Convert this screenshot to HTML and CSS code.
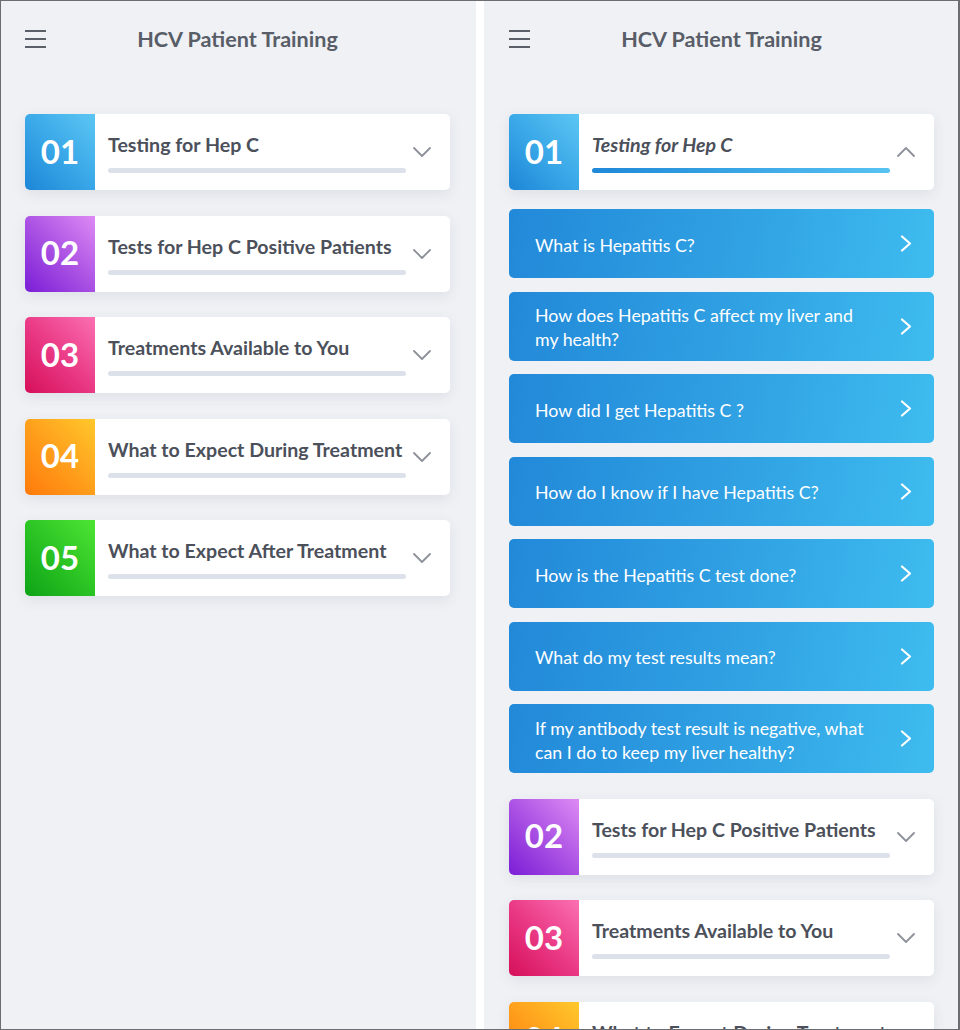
FILE: index.html
```html
<!DOCTYPE html>
<html lang="en">
<head>
<meta charset="utf-8">
<title>HCV Patient Training</title>
<link rel="stylesheet" href="styles.css">
</head>
<body>
<div class="frame">
  <section class="panel panel-left">
    <header class="topbar">
      <span class="menu"><i></i><i></i><i></i></span>
      <h1 class="title">HCV Patient Training</h1>
      <span></span>
    </header>
    <div class="modules">
      <div class="card">
        <div class="num n1">01</div>
        <div class="card-body"><div class="card-title">Testing for Hep C</div><div class="bar"></div></div>
        <div class="toggle"><svg width="18" height="10" viewBox="0 0 18 10"><path d="M1 1 L9 9 L17 1"/></svg></div>
      </div>
      <div class="card">
        <div class="num n2">02</div>
        <div class="card-body"><div class="card-title">Tests for Hep C Positive Patients</div><div class="bar"></div></div>
        <div class="toggle"><svg width="18" height="10" viewBox="0 0 18 10"><path d="M1 1 L9 9 L17 1"/></svg></div>
      </div>
      <div class="card">
        <div class="num n3">03</div>
        <div class="card-body"><div class="card-title">Treatments Available to You</div><div class="bar"></div></div>
        <div class="toggle"><svg width="18" height="10" viewBox="0 0 18 10"><path d="M1 1 L9 9 L17 1"/></svg></div>
      </div>
      <div class="card">
        <div class="num n4">04</div>
        <div class="card-body"><div class="card-title">What to Expect During Treatment</div><div class="bar"></div></div>
        <div class="toggle"><svg width="18" height="10" viewBox="0 0 18 10"><path d="M1 1 L9 9 L17 1"/></svg></div>
      </div>
      <div class="card">
        <div class="num n5">05</div>
        <div class="card-body"><div class="card-title">What to Expect After Treatment</div><div class="bar"></div></div>
        <div class="toggle"><svg width="18" height="10" viewBox="0 0 18 10"><path d="M1 1 L9 9 L17 1"/></svg></div>
      </div>
    </div>
  </section>

  <section class="panel panel-right">
    <header class="topbar">
      <span class="menu"><i></i><i></i><i></i></span>
      <h1 class="title">HCV Patient Training</h1>
      <span></span>
    </header>
    <div class="modules">
      <div class="group">
        <div class="card open">
          <div class="num n1">01</div>
          <div class="card-body"><div class="card-title">Testing for Hep C</div><div class="bar bar-active"></div></div>
          <div class="toggle"><svg width="18" height="10" viewBox="0 0 18 10"><path d="M1 9 L9 1 L17 9"/></svg></div>
        </div>
        <div class="topics">
          <a class="topic"><span class="topic-text">What is Hepatitis C?</span><svg class="go" width="12" height="17" viewBox="0 0 12 17"><path d="M2 1.5 L10 8.5 L2 15.5"/></svg></a>
          <a class="topic"><span class="topic-text">How does Hepatitis C affect my liver and my health?</span><svg class="go" width="12" height="17" viewBox="0 0 12 17"><path d="M2 1.5 L10 8.5 L2 15.5"/></svg></a>
          <a class="topic"><span class="topic-text">How did I get Hepatitis C ?</span><svg class="go" width="12" height="17" viewBox="0 0 12 17"><path d="M2 1.5 L10 8.5 L2 15.5"/></svg></a>
          <a class="topic"><span class="topic-text">How do I know if I have Hepatitis C?</span><svg class="go" width="12" height="17" viewBox="0 0 12 17"><path d="M2 1.5 L10 8.5 L2 15.5"/></svg></a>
          <a class="topic"><span class="topic-text">How is the Hepatitis C test done?</span><svg class="go" width="12" height="17" viewBox="0 0 12 17"><path d="M2 1.5 L10 8.5 L2 15.5"/></svg></a>
          <a class="topic"><span class="topic-text">What do my test results mean?</span><svg class="go" width="12" height="17" viewBox="0 0 12 17"><path d="M2 1.5 L10 8.5 L2 15.5"/></svg></a>
          <a class="topic"><span class="topic-text">If my antibody test result is negative, what can I do to keep my liver healthy?</span><svg class="go" width="12" height="17" viewBox="0 0 12 17"><path d="M2 1.5 L10 8.5 L2 15.5"/></svg></a>
        </div>
      </div>
      <div class="card">
        <div class="num n2">02</div>
        <div class="card-body"><div class="card-title">Tests for Hep C Positive Patients</div><div class="bar"></div></div>
        <div class="toggle"><svg width="18" height="10" viewBox="0 0 18 10"><path d="M1 1 L9 9 L17 1"/></svg></div>
      </div>
      <div class="card">
        <div class="num n3">03</div>
        <div class="card-body"><div class="card-title">Treatments Available to You</div><div class="bar"></div></div>
        <div class="toggle"><svg width="18" height="10" viewBox="0 0 18 10"><path d="M1 1 L9 9 L17 1"/></svg></div>
      </div>
      <div class="card">
        <div class="num n4">04</div>
        <div class="card-body"><div class="card-title">What to Expect During Treatment</div><div class="bar"></div></div>
        <div class="toggle"><svg width="18" height="10" viewBox="0 0 18 10"><path d="M1 1 L9 9 L17 1"/></svg></div>
      </div>
    </div>
  </section>
</div>
</body>
</html>
```

FILE: styles.css
```css
* { box-sizing: border-box; }
html, body { margin: 0; padding: 0; }
body {
  font-family: "Lato", "Noto Sans", sans-serif;
  background: #ffffff;
}
.frame {
  width: 960px;
  height: 1030px;
  border: 1px solid #6c6d72;
  border-right-width: 2px;
  display: flex;
  gap: 8px;
  background: #ffffff;
  overflow: hidden;
}
.panel {
  background: #eff1f5;
  height: 100%;
  overflow: hidden;
}
.panel-left { width: 475px; padding: 0 26px 0 24px; }
.panel-right { flex: 1; padding: 0 24px 0 25px; }

.topbar {
  height: 76px;
  display: grid;
  grid-template-columns: 1fr auto 1fr;
  align-items: center;
}
.menu {
  width: 21px;
  display: flex;
  flex-direction: column;
  gap: 5.6px;
}
.menu i {
  display: block;
  height: 2px;
  background: #5a5f68;
}
.title {
  margin: 0;
  font-size: 21.6px;
  font-weight: 700;
  color: #585d67;
}

.modules {
  margin-top: 37px;
  display: flex;
  flex-direction: column;
  gap: 25.5px;
}
.card {
  display: flex;
  height: 76px;
  background: #ffffff;
  border-radius: 5px;
  overflow: hidden;
  box-shadow: 0 4px 14px rgba(40, 50, 70, 0.09);
  flex-shrink: 0;
}
.num {
  width: 70px;
  flex-shrink: 0;
  display: flex;
  align-items: center;
  justify-content: center;
  color: #ffffff;
  font-size: 33px;
  font-weight: 700;
  padding-bottom: 3px;
}
.n1 { background: linear-gradient(45deg, #1d86d7 0%, #3aa8e8 50%, #5cc6f3 100%); }
.n2 { background: linear-gradient(45deg, #7a1ed6 0%, #ab52e4 50%, #de8af4 100%); }
.n3 { background: linear-gradient(45deg, #d60f59 0%, #ea3a86 50%, #fb70b2 100%); }
.n4 { background: linear-gradient(45deg, #ff7a0b 0%, #ff9f1c 50%, #ffc82b 100%); }
.n5 { background: linear-gradient(45deg, #0ea216 0%, #2cc424 50%, #4de533 100%); }

.card-body {
  width: 311px;
  padding: 20px 0 17px 13px;
  display: flex;
  flex-direction: column;
  justify-content: space-between;
}
.card-title {
  font-size: 19.6px;
  line-height: 22px;
  font-weight: 700;
  color: #4b505a;
  white-space: nowrap;
}
.open .card-title { font-style: italic; }
.bar {
  height: 5px;
  border-radius: 3px;
  background: #dde1e9;
}
.bar-active {
  background: linear-gradient(90deg, #1f88d8, #57c3f2);
}
.toggle {
  flex: 1;
  display: flex;
  align-items: center;
  padding-left: 7px;
}
.toggle svg path {
  fill: none;
  stroke: #8d919a;
  stroke-width: 1.8;
  stroke-linecap: round;
  stroke-linejoin: round;
}

.group {
  display: flex;
  flex-direction: column;
  gap: 19px;
}
.topics {
  display: flex;
  flex-direction: column;
  gap: 13.5px;
}
.topic {
  display: flex;
  align-items: center;
  min-height: 69px;
  padding: 0 22px 0 26px;
  border-radius: 5px;
  background: linear-gradient(100deg, #2289d9 0%, #2f9fe2 50%, #3ebcef 100%);
  color: #ffffff;
}
.topic-text {
  width: 340px;
  font-size: 17.8px;
  line-height: 24px;
  font-weight: 400;
  padding-top: 2px;
}
.go { margin-left: auto; }
.go path {
  fill: none;
  stroke: #ffffff;
  stroke-width: 2.2;
  stroke-linecap: round;
  stroke-linejoin: round;
}
```
